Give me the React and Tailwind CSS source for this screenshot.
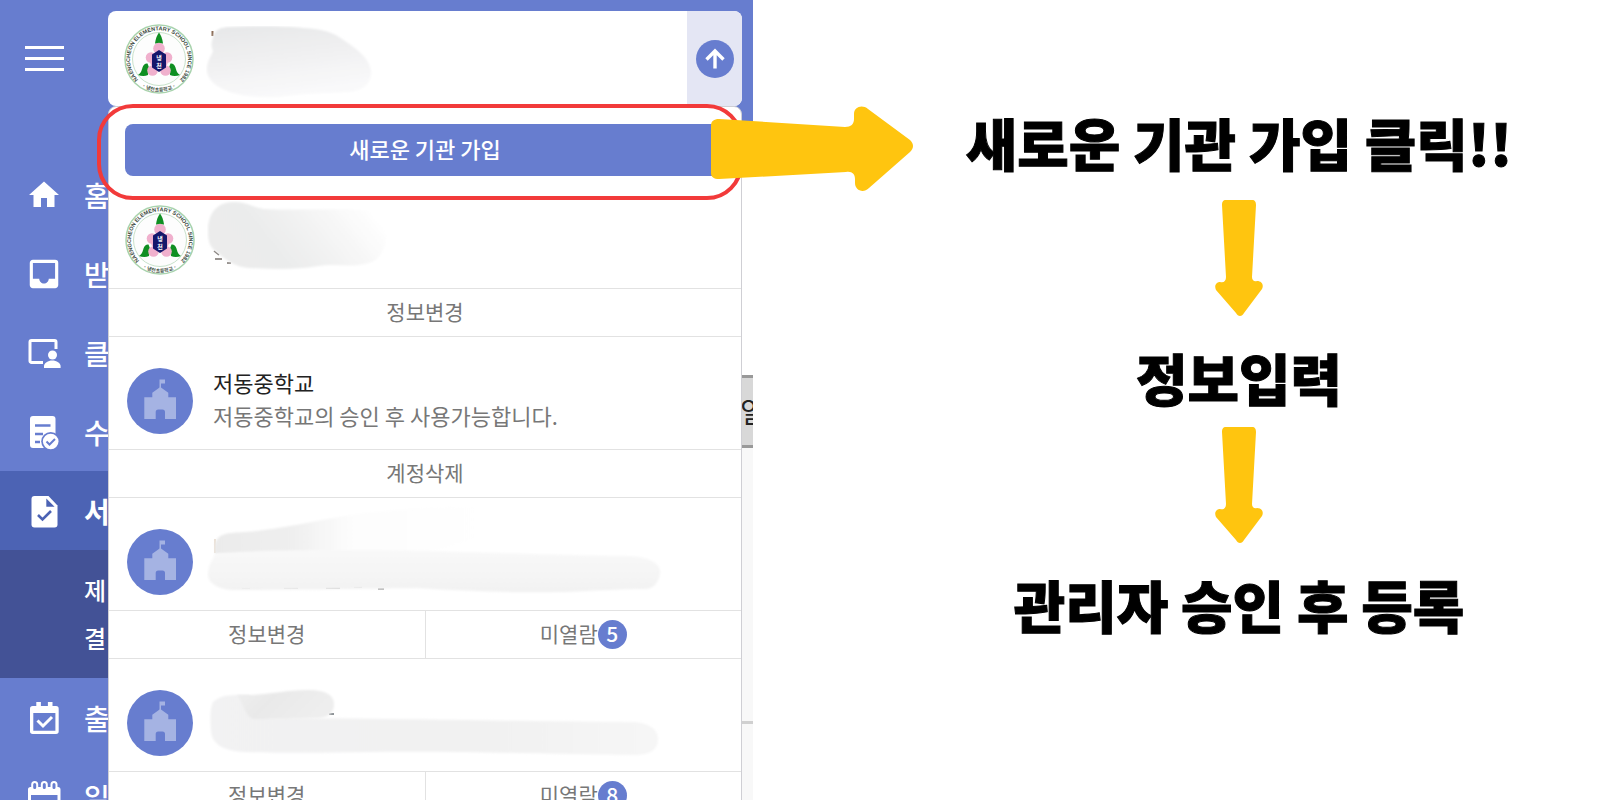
import React from "react";
import { MdHome, MdInbox } from "react-icons/md";

const ClassIcon = () => (
  <svg viewBox="0 0 40 40" className="w-10 h-10" fill="none">
    <path d="M32 16V9a1.500 1.500 0 0 0-1.500-1.500H7.500A1.500 1.500 0 0 0 6 9v19a1.500 1.500 0 0 0 1.500 1.500H19" stroke="#fff" strokeWidth="3" />
    <circle cx="28.500" cy="22" r="4.500" fill="#fff" />
    <path d="M20 35v-2c0-3 4-5.500 8.300-5.500s8.300 2.500 8.300 5.500v2z" fill="#fff" />
  </svg>
);

const SurveyIcon = () => (
  <svg viewBox="0 0 40 40" className="w-10 h-10" fill="none">
    <rect x="6" y="4" width="25.500" height="32" rx="3" fill="#fff" />
    <path d="M11 13.500h15.500M11 22h8M11 30h5" stroke="#677dcf" strokeWidth="2.500" />
    <circle cx="26.700" cy="29.500" r="9.500" fill="#677dcf" />
    <circle cx="26.700" cy="29.500" r="7.800" fill="#fff" />
    <path d="M22.500 29.500l3 3 5.500-5.500" stroke="#677dcf" strokeWidth="2" />
  </svg>
);

const DocumentIcon = () => (
  <svg viewBox="0 0 40 40" className="w-10 h-10" fill="none">
    <path d="M10.500 5h14l9 9.500v19a3 3 0 0 1-3 3h-20a3 3 0 0 1-3-3V8a3 3 0 0 1 3-3z" fill="#fff" />
    <path d="M22.300 7.500v8.300h8.300z" fill="#4c63b4" />
    <path d="M14 24l4.500 4.500 8.500-8.500" stroke="#4c63b4" strokeWidth="2.600" />
  </svg>
);

const AttendanceIcon = () => (
  <svg viewBox="0 0 40 40" className="w-10 h-10" fill="none">
    <path d="M12.300 4h4.600v4h7V4h4.600v4h3.500a2.700 2.700 0 0 1 2.700 2.700v22.600A2.700 2.700 0 0 1 32 36H8.700A2.700 2.700 0 0 1 6 33.300V10.700A2.700 2.700 0 0 1 8.700 8h3.600zM9.300 15v17.700h22.100V15z" fill="#fff" fillRule="evenodd" />
    <path d="M13.500 22.500l5.500 5.500 9-9" stroke="#fff" strokeWidth="3" />
  </svg>
);

const ScheduleIcon = () => (
  <svg viewBox="0 0 40 40" className="w-10 h-10" fill="none">
    <path d="M7 10h27a2.500 2.500 0 0 1 2.500 2.500V36H4V12.500A2.500 2.500 0 0 1 7 10zM7 18v15h26.500V18z" fill="#fff" fillRule="evenodd" />
    {[10.7, 20.3, 30].map((cx) => (
      <rect key={cx} x={cx - 2.5} y="5" width="5" height="8" rx="2.500" fill="#677dcf" stroke="#fff" strokeWidth="2" />
    ))}
  </svg>
);

const HomeIcon = () => <MdHome className="w-9 h-9 mx-0.5 text-white" />;
const InboxIcon = () => <MdInbox className="w-[38px] h-[38px] mx-px text-white" />;

const menuTop = [
  { label: "홈", Icon: HomeIcon },
  { label: "받", Icon: InboxIcon },
  { label: "클", Icon: ClassIcon },
  { label: "수", Icon: SurveyIcon },
  { label: "서", Icon: DocumentIcon, active: true },
];

const menuBottom = [
  { label: "출", Icon: AttendanceIcon },
  { label: "일", Icon: ScheduleIcon },
];

const MenuItem = ({ label, Icon, active }) => (
  <a
    href="#"
    className={`flex items-center gap-5 h-[79px] pl-6 text-[28px] whitespace-nowrap text-white ${active ? "bg-[#4c63b4] font-bold" : "font-medium"}`}
  >
    <span className="shrink-0"><Icon /></span>
    {label}
  </a>
);

const Sidebar = () => (
  <nav className="w-[108px] shrink-0 overflow-hidden bg-[#677dcf]">
    <div className="h-[155px] pl-6 pt-[38px]">
      <button type="button" aria-label="메뉴" className="block">
        <svg viewBox="0 0 40 40" className="w-10 h-10" stroke="#fff" strokeWidth="3">
          <path d="M1 9.500h39M1 20.500h39M1 31.500h39" />
        </svg>
      </button>
    </div>
    {menuTop.map((item) => (
      <MenuItem key={item.label} {...item} />
    ))}
    <div className="bg-[#435296] py-4 pl-[84px] text-2xl font-medium text-white">
      <a href="#" className="block h-12 leading-[48px]">제</a>
      <a href="#" className="block h-12 leading-[48px]">결</a>
    </div>
    {menuBottom.map((item) => (
      <MenuItem key={item.label} {...item} />
    ))}
  </nav>
);

const SchoolCrest = ({ id }) => (
  <svg viewBox="0 0 70 70" className="w-[70px] h-[70px] shrink-0">
    <defs>
      <path id={`${id}-top`} d="M17.600 58.500A29 29 0 1 1 52.400 58.500" />
      <path id={`${id}-bottom`} d="M14 60A32.700 32.700 0 0 0 56 60" />
    </defs>
    <circle cx="35" cy="35" r="34" fill="#fff" stroke="#a9d3ae" strokeWidth="1.500" />
    <circle cx="35" cy="35" r="26.500" fill="#fdfdfd" stroke="#c8e2cb" strokeWidth="1" />
    <text fontSize="5.500" fontWeight="700" fill="#3c4a40" className="font-['Liberation_Sans',sans-serif]">
      <textPath href={`#${id}-top`} startOffset="50%" textAnchor="middle">NAENGCHEON ELEMENTARY SCHOOL SINCE 1982</textPath>
    </text>
    <text fontSize="5" fontWeight="700" fill="#3c4a40">
      <textPath href={`#${id}-bottom`} startOffset="50%" textAnchor="middle">· 냉천초등학교 ·</textPath>
    </text>
    <path d="M35 8.500c2 2.500 3.500 6.500 4 11h-8c.5-4.500 2-8.500 4-11z" fill="#0f8f22" />
    <path d="M14 51c3-2 3.500-4 4.500-7.500 1-3 3-4.500 5-4l1.500 4c-1 1.500-.5 3.500-1 7.500-3 1.500-7 1.200-10 0z" fill="#0f8f22" />
    <path d="M56 51c-3-2-3.500-4-4.500-7.500-1-3-3-4.500-5-4l-1.500 4c1 1.500.5 3.500 1 7.500 3 1.500 7 1.200 10 0z" fill="#0f8f22" />
    <g fill="#f0b0cd">
      <circle cx="35" cy="24.500" r="5.800" />
      <circle cx="27" cy="33.500" r="5.300" />
      <circle cx="43" cy="33.500" r="5.300" />
      <circle cx="28.500" cy="46.500" r="5.300" />
      <circle cx="41.500" cy="46.500" r="5.300" />
      <circle cx="35" cy="37" r="9" />
    </g>
    <path d="M35 26l7 4.500v13L35 48l-7-4.500v-13z" fill="#15176b" />
    <g fill="#fff" fontSize="6" fontWeight="700" textAnchor="middle">
      <text x="35" y="35.500">냉</text>
      <text x="35" y="43.500">천</text>
    </g>
  </svg>
);

const SchoolAvatar = () => (
  <svg viewBox="-2 -2 70 70" className="w-[70px] h-[70px] shrink-0">
    <circle cx="33" cy="33" r="33" fill="#677dcf" />
    <g fill="#a5b3e3">
      <path d="M32.500 11.500H38v4h-4v5h-1.500z" />
      <path d="M33.300 19l8 5.700v4.600H49V51H38v-7a2.500 2.500 0 0 0-2.500-2.500h-4.300a2.500 2.500 0 0 0-2.500 2.500v7H17.300V29.300h8v-4.600z" />
    </g>
  </svg>
);

// Names of the institutions are painted over with a soft grey brush
const SmudgeHeader = () => (
  <svg viewBox="0 0 170 76" className="w-[170px] h-[76px]">
    <defs>
      <linearGradient id="smudge-a" x1="0" y1="0" x2="0.300" y2="1">
        <stop offset="0" stopColor="#e6e7e8" />
        <stop offset="0.500" stopColor="#f0f0f1" />
        <stop offset="1" stopColor="#f9f9fa" />
      </linearGradient>
      <filter id="soft-a"><feGaussianBlur stdDeviation="1" /></filter>
    </defs>
    <path d="M6.500 5v5" stroke="#8a6a55" strokeWidth="2" />
    <path filter="url(#soft-a)" fill="url(#smudge-a)" d="M7 12C8 4 13 2 22 1c25-1 60-1 75 1 20 1 30 4 42 13 14 9 25 19 26 30 1 13-8 19-22 21-28 1-50 2-70 5-22 1-46-1-60-10C3 55 0 47 1 41c1-8 5-12 6-16-2-5-2-8 0-13z" />
  </svg>
);

const SmudgeFirst = () => (
  <svg viewBox="0 0 190 70" className="w-[190px] h-[70px]">
    <defs>
      <linearGradient id="smudge-b" x1="0" y1="0.700" x2="1" y2="0.400">
        <stop offset="0" stopColor="#ececec" />
        <stop offset="0.350" stopColor="#ebecec" />
        <stop offset="0.700" stopColor="#f5f5f5" />
        <stop offset="1" stopColor="#ffffff" />
      </linearGradient>
      <filter id="soft-b"><feGaussianBlur stdDeviation="1" /></filter>
    </defs>
    <path d="M7 50l5 4m-4 4h7m5 4h4" stroke="#77706c" strokeWidth="1.500" />
    <path filter="url(#soft-b)" fill="url(#smudge-b)" d="M1 30C1 12 10 1 27 1c12 0 18 5 30 7 40 2 80-2 115 2 12 12 10 40-5 50-18 8-34 2-55 5-25 4-50 3-70 2C22 65 14 53 7 49 2 44 1 38 1 30z" />
  </svg>
);

const SmudgeLong = () => (
  <svg viewBox="0 0 456 92" className="w-[456px] h-[92px]">
    <defs>
      <linearGradient id="smudge-c" x1="0" y1="0" x2="1" y2="0">
        <stop offset="0" stopColor="#ebebeb" />
        <stop offset="0.250" stopColor="#efefef" />
        <stop offset="0.450" stopColor="#fdfdfd" />
        <stop offset="1" stopColor="#ffffff" />
      </linearGradient>
      <linearGradient id="smudge-d" x1="0" y1="0" x2="0" y2="1">
        <stop offset="0" stopColor="#f9f9f9" />
        <stop offset="1" stopColor="#f2f2f2" />
      </linearGradient>
      <filter id="soft-c"><feGaussianBlur stdDeviation="1" /></filter>
    </defs>
    <path d="M8 37v14" stroke="#d8c3ac" strokeWidth="1" />
    <path filter="url(#soft-c)" fill="url(#smudge-c)" d="M8 42c3-10 10-11 30-12C70 28 100 20 150 12c60-8 130-10 165-8-10 20-40 36-100 48H8z" />
    <path d="M35 86h8m34 0h14m28 0h14m14-1h8m16 2h6" stroke="#b5b5b5" strokeWidth="2" />
    <path filter="url(#soft-c)" fill="url(#smudge-d)" d="M8 52c20-3 80-4 130-4 80-1 180 5 285 6 20 1 32 8 30 18-2 9-6 14-14 15-30 0-50 2-80 3-60 1-100-1-150-4-70 1-120 2-185 2C8 86 0 80 1 71c1-10 5-14 7-19z" />
  </svg>
);

const SmudgeShort = () => (
  <svg viewBox="0 0 456 70" className="w-[456px] h-[70px]">
    <defs>
      <linearGradient id="smudge-e" x1="0" y1="0" x2="1" y2="0.300">
        <stop offset="0" stopColor="#efefef" />
        <stop offset="0.400" stopColor="#e9e9e9" />
        <stop offset="1" stopColor="#eeeeee" />
      </linearGradient>
      <linearGradient id="smudge-f" x1="0" y1="0" x2="1" y2="0">
        <stop offset="0" stopColor="#f2f2f3" />
        <stop offset="0.600" stopColor="#f1f1f1" />
        <stop offset="1" stopColor="#f6f6f6" />
      </linearGradient>
      <filter id="soft-e"><feGaussianBlur stdDeviation="1" /></filter>
    </defs>
    <path d="M122 26h5" stroke="#8d9296" strokeWidth="2" fill="none" />
    <path filter="url(#soft-e)" fill="url(#smudge-f)" d="M6 14c8-8 22-7 36-7 8 6 10 20 20 23 110 0 230 3 360 4 18 0 29 6 29 17s-8 16-24 16c-80-1-180-4-260-3-50 1-100 1-130 0C17 63 4 56 4 42c-1-10-1-22 2-28z" />
    <path filter="url(#soft-e)" fill="url(#smudge-e)" d="M30 7C60 8 75 2 102 2c16 0 25 5 25 14 0 9-5 13-15 14-25 1-45 1-66 1C38 28 36 14 30 7z" />
  </svg>
);

const FooterButton = ({ children }) => (
  <button type="button" className="flex flex-1 items-center justify-center pb-px text-[#777] text-[21px]">
    {children}
  </button>
);

const Institution = ({ avatar, children, actions }) => (
  <li>
    <div className="flex items-center gap-3 h-28 pl-4 pt-[15px]">
      {avatar}
      {children}
    </div>
    <div className="flex h-[49px] border-y border-[#e2e2e2] divide-x divide-[#e2e2e2]">{actions}</div>
  </li>
);

const Unread = ({ count }) => (
  <>
    미열람
    <span className="flex items-center justify-center w-[29px] h-[29px] rounded-full bg-[#677dcf] font-medium text-white">{count}</span>
  </>
);

const RightArrow = () => (
  <svg viewBox="0 0 202 86" className="absolute z-20 w-[202px] h-[86px] left-[586px] -top-[18px]" fill="#ffc50f">
    <path d="M8 13L134 21C140 21 143 18 143 13V8C143 1 151-2 157 3L199 34C203 38 203 42 199 46L158 82C152 88 144 84 144 77V73C144 68 141 65 135 66L8 73C3 73 0 71 0 67V20C0 15 3 13 8 13Z" />
  </svg>
);

const DownArrow = ({ className }) => (
  <svg viewBox="0 0 48 116" className={`w-12 h-[116px] ${className}`} fill="#ffc50f">
    <path d="M11 0H37C40 0 41 2 41 5L37 77C37 80 39 82 42 81C47 81 49 85 47 89L29 113C27 117 23 117 21 113L1 90C-1 86 1 82 5 82C9 83 11 81 11 77L7 5C7 2 8 0 11 0Z" />
  </svg>
);

const AccountPanel = () => (
  <div className="flex-1 min-w-0 flex flex-col bg-[#677dcf] pt-[11px]">
    <div className="flex h-[95px] shrink-0 overflow-hidden rounded-lg bg-white">
      <div className="flex flex-1 items-center gap-3 pl-4">
        <SchoolCrest id="crest-current" />
        <div className="pt-2.5"><SmudgeHeader /></div>
      </div>
      <button type="button" aria-label="닫기" className="flex items-center justify-center w-[55px] bg-[#e4e6f4]">
        <svg viewBox="0 0 38 38" className="w-[38px] h-[38px]" fill="none">
          <circle cx="19" cy="19" r="19" fill="#677dcf" />
          <path d="M19 28.500V11.500M10.500 19.500L19 11l8.500 8.500" stroke="#fff" strokeWidth="3.400" />
        </svg>
      </button>
    </div>

    <div className="flex-1 rounded-t-lg border border-[#cfcfd4] bg-white">
      <div className="relative mt-[17px] mx-4">
        <button type="button" className="block w-full h-[52px] rounded-lg bg-[#677dcf] pb-1 text-[22px] font-medium text-white">
          새로운 기관 가입
        </button>
        <div className="absolute z-10 -top-5 -bottom-6 -left-7 -right-[18px] rounded-[36px] border-4 border-[#f23a3a] pointer-events-none" />
        <RightArrow />
      </div>
      <ul>
        <Institution avatar={<SchoolCrest id="crest-first" />} actions={<FooterButton>정보변경</FooterButton>}>
          <div className="pb-2"><SmudgeFirst /></div>
        </Institution>
        <Institution avatar={<SchoolAvatar />} actions={<FooterButton>계정삭제</FooterButton>}>
          <div className="pb-1 pl-1.5 text-[22px] leading-[33px]">
            <p className="text-[#222]">저동중학교</p>
            <p className="text-[#777]">저동중학교의 승인 후 사용가능합니다.</p>
          </div>
        </Institution>
        <Institution
          avatar={<SchoolAvatar />}
          actions={
            <>
              <FooterButton>정보변경</FooterButton>
              <FooterButton><Unread count={5} /></FooterButton>
            </>
          }
        >
          <div className="pb-7"><SmudgeLong /></div>
        </Institution>
        <Institution
          avatar={<SchoolAvatar />}
          actions={
            <>
              <FooterButton>정보변경</FooterButton>
              <FooterButton><Unread count={8} /></FooterButton>
            </>
          }
        >
          <SmudgeShort />
        </Institution>
      </ul>
    </div>
  </div>
);

// The sliver of the page that still shows to the right of the panel
const PageEdge = () => (
  <div className="w-[11px] shrink-0 flex flex-col overflow-hidden">
    <div className="h-[124px] shrink-0 bg-[#677dcf]" />
    <div className="h-[251px] shrink-0 bg-white" />
    <div className="h-[73px] shrink-0 border-y-[3px] border-[#999] bg-[#d8d8d8] -indent-0.5 text-[28px] leading-[66px] text-[#222]">일</div>
    <div className="h-[273px] shrink-0 bg-[#f8f8f8]" />
    <div className="flex-1 border-t-[3px] border-[#d0d0d0] bg-[#f8f8f8]" />
  </div>
);

const Steps = () => (
  <section className="flex-1 flex flex-col items-center pt-[114px] pl-[125px] text-[56px] leading-[56px] font-black text-black whitespace-nowrap [-webkit-text-stroke:1px_black]">
    <h1>새로운 기관 가입 클릭!!</h1>
    <DownArrow className="mt-[30px] mb-[33px]" />
    <h2>정보입력</h2>
    <DownArrow className="mt-[22px] mb-[33px]" />
    <h2>관리자 승인 후 등록</h2>
  </section>
);

export default function App() {
  return (
    <main className="flex h-screen overflow-hidden bg-white font-['Noto_Sans_CJK_KR',sans-serif]">
      <section className="flex w-[47%] min-w-[753px] shrink-0">
        <Sidebar />
        <AccountPanel />
        <PageEdge />
      </section>
      <Steps />
    </main>
  );
}
